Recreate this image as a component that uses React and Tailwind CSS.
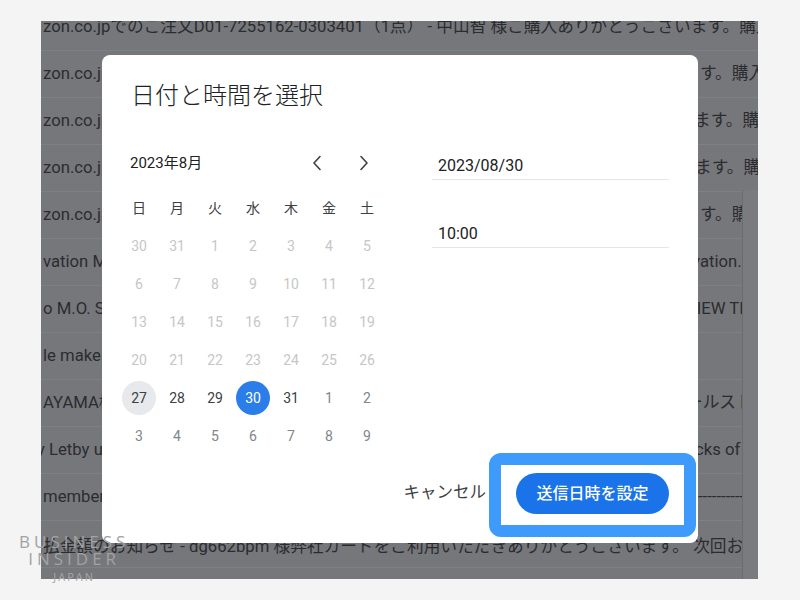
import React from "react";

const rows = [
  { l: "zon.co.jpでのご注文D01-7255162-0303401（1点） - 中山智 様ご購入ありがとうございます。購入いただいた商品", r: null, full: true },
  { l: "zon.co.jpでのご注文", r: "す。購入" },
  { l: "zon.co.jpでのご注文", r: "ます。購入", off: "-6px" },
  { l: "zon.co.jpでのご注文", r: "ます。購入", off: "-5px" },
  { l: "zon.co.jpでのご注文", r: "す。購入" },
  { l: "vation Membership", r: "vation.", off: "-8px" },
  { l: "o M.O. Store", r: "VIEW TIME", off: "-14px" },
  { l: "le makes", r: "" },
  { l: "AYAMA様", r: "ールスト", off: "-14px" },
  { l: "y Letby update", r: "cks of", off: "-5px", lo: "-6px" },
  { l: "member", r: "-----------------", off: "-2px" },
  { l: "払金額のお知らせ - dg662bpm 様弊社カードをご利用いただきありがとうございます。 次回お支払い", r: null, full: true, pt: "pt-[6px]" },
];

const weekdays = ["日", "月", "火", "水", "木", "金", "土"];

const days = [
  ["30", "d"], ["31", "d"], ["1", "d"], ["2", "d"], ["3", "d"], ["4", "d"], ["5", "d"],
  ["6", "d"], ["7", "d"], ["8", "d"], ["9", "d"], ["10", "d"], ["11", "d"], ["12", "d"],
  ["13", "d"], ["14", "d"], ["15", "d"], ["16", "d"], ["17", "d"], ["18", "d"], ["19", "d"],
  ["20", "d"], ["21", "d"], ["22", "d"], ["23", "d"], ["24", "d"], ["25", "d"], ["26", "d"],
  ["27", "today"], ["28", "a"], ["29", "a"], ["30", "sel"], ["31", "a"], ["1", "n"], ["2", "n"],
  ["3", "n"], ["4", "n"], ["5", "n"], ["6", "n"], ["7", "n"], ["8", "n"], ["9", "n"],
];

function DayCell({ v, t }) {
  let cls = "text-[#c6c6c6]";
  let circle = "";
  if (t === "a") cls = "text-[#3c4043]";
  if (t === "n") cls = "text-[#80868b]";
  if (t === "today") {
    cls = "text-[#3c4043]";
    circle = "bg-[#e8e9ec]";
  }
  if (t === "sel") {
    cls = "text-white";
    circle = "bg-[#2b7de9]";
  }
  return (
    <div className="h-[38px] flex items-center justify-center">
      <div className={`w-[34px] h-[34px] rounded-full flex items-center justify-center text-[14px] ${cls} ${circle}`}>
        {v}
      </div>
    </div>
  );
}

function Chevron({ dir }) {
  return (
    <svg width="12" height="16" viewBox="0 0 12 16" fill="none">
      {dir === "left" ? (
        <polyline points="9,1.5 3,8 9,14.5" stroke="#3c4043" strokeWidth="1.6" strokeLinecap="round" strokeLinejoin="round" />
      ) : (
        <polyline points="3,1.5 9,8 3,14.5" stroke="#3c4043" strokeWidth="1.6" strokeLinecap="round" strokeLinejoin="round" />
      )}
    </svg>
  );
}

export default function App() {
  const font = { fontFamily: "Roboto, 'Noto Sans CJK JP', sans-serif" };
  return (
    <div className="relative w-[800px] h-[600px] bg-[#f4f4f4] overflow-hidden pt-[21px] pl-[41px]" style={font}>
      {/* dimmed background list */}
      <div className="relative w-[717px] h-[558px] bg-[#76777b] overflow-hidden">
        <div className="mt-[-17px]">
          {rows.map((row, i) => (
            <div key={i} className={`h-[47px] border-b border-[#7f8084] flex items-center text-[16.7px] text-[#2b2c2f] whitespace-nowrap overflow-hidden ${row.pt || ""}`}>
              {row.full ? (
                <div className="pl-[2px]">{row.l}</div>
              ) : (
                <>
                  <div className="w-[657px] shrink-0 overflow-hidden pl-[2px]">
                    <span style={{ marginLeft: row.lo || 0 }}>{row.l}</span>
                  </div>
                  <div className="flex-1 overflow-hidden">
                    <span className="inline-block pl-[2px]" style={{ marginLeft: row.off || 0 }}>{row.r}</span>
                  </div>
                </>
              )}
            </div>
          ))}
        </div>
        {/* right side panel edge */}
        <div className="absolute left-[701px] top-[169px] w-[16px] bottom-0 bg-[#7a7b7f] border-l border-[#6b6c70]" />
      </div>

      {/* dialog */}
      <div className="absolute left-[102px] top-[55px] w-[596px] h-[488px] bg-white rounded-lg flex flex-col">
        <div className="pt-[25px] pl-[29px] text-[24px] leading-[32px] font-light text-[#202124]">日付と時間を選択</div>
        <div className="flex mt-[33px]">
          {/* calendar */}
          <div className="ml-[18px] w-[266px]">
            <div className="h-[36px] flex items-center justify-between pl-[10px] pr-[4px]">
              <div className="text-[15px] text-[#202124]">2023年8月</div>
              <div className="flex gap-[11px]">
                <div className="w-[36px] h-[36px] flex items-center justify-center"><Chevron dir="left" /></div>
                <div className="w-[36px] h-[36px] flex items-center justify-center"><Chevron dir="right" /></div>
              </div>
            </div>
            <div className="grid grid-cols-7 mt-[8px]">
              {weekdays.map((w) => (
                <div key={w} className="h-[38px] flex items-center justify-center text-[14px] text-[#3c4043]">{w}</div>
              ))}
              {days.map(([v, t], i) => (
                <DayCell key={i} v={v} t={t} />
              ))}
            </div>
          </div>
          {/* inputs */}
          <div className="ml-[46px] w-[237px]">
            <div className="h-[35px] border-b border-[#e6e6e6] pt-[9px] pl-[6px] text-[16px] leading-[24px] text-[#202124]">2023/08/30</div>
            <div className="mt-[33px] h-[35px] border-b border-[#e6e6e6] pt-[9px] pl-[6px] text-[16px] leading-[24px] text-[#202124]">10:00</div>
          </div>
        </div>
        <div className="mt-auto flex items-center justify-end gap-[30px] pr-[29px] pb-[29px]">
          <div className="text-[16.5px] text-[#3c4043]">キャンセル</div>
          <div className="w-[153px] h-[41px] rounded-full bg-[#1a73e8] flex items-center justify-center text-white text-[16px] font-medium">送信日時を設定</div>
        </div>
      </div>

      {/* highlight annotation */}
      <div className="absolute left-[489px] top-[453px] w-[207px] h-[84px] border-[12px] border-[#3e9bfb] rounded-[12px]" />

      {/* watermark */}
      <div className="absolute z-10 left-[19px] top-[533px] flex flex-col items-center text-[#a2a2a2] leading-none" style={{ fontFamily: "'Open Sans', 'Liberation Sans', sans-serif" }}>
        <div className="text-[17px] tracking-[4px]">BUSINESS</div>
        <div className="text-[17px] tracking-[4px]">INSIDER</div>
        <div className="text-[11px] tracking-[2px] mt-[4px] text-[#a6a6a6]">JAPAN</div>
      </div>
    </div>
  );
}
